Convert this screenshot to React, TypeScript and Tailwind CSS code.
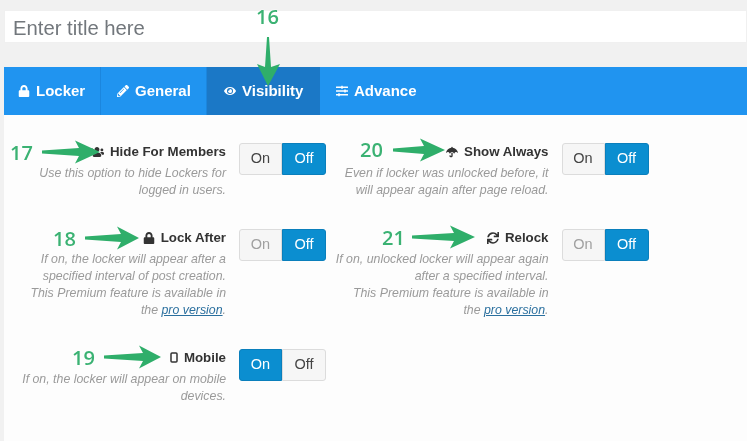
import type { ReactNode } from "react";
import { FaLock, FaPencilAlt, FaEye, FaSlidersH, FaUsers, FaUmbrella, FaSync } from "react-icons/fa";

type SettingProps = {
  icon: ReactNode;
  title: string;
  lines: string[];
  pro?: boolean;
  value: "on" | "off";
  disabled?: boolean;
};

// a single arrow of the annotation layer, pointing along +x from (x1,y) to (x2,y)
function hArrowPath(x1: number, x2: number, y: number, head: number) {
  const n = x2 - head;
  return `M${x1} ${y - 1.5} L${n + 4} ${y - 4} L${n} ${y - 11.5} L${x2} ${y} L${n} ${y + 11.5} L${n + 4} ${y + 4} L${x1} ${y + 1.5} Z`;
}

function MobileIcon() {
  return (
    <svg width="8" height="11" viewBox="0 0 8 11" fill="none" stroke="currentColor" strokeWidth="1.5">
      <rect x="1" y="1" width="6" height="9" rx="1" />
    </svg>
  );
}

function Toggle({ value, disabled }: { value: "on" | "off"; disabled?: boolean }) {
  const active = "bg-[#0b8ed0] text-white border-[#0a7fbc]";
  const idle = "bg-[#f6f6f6] border-[#dcdcdc]";
  return (
    <div className="flex w-[87px] h-[32px] shrink-0 text-[14.5px]">
      <div
        className={`flex w-[43px] items-center justify-center rounded-l-[3px] border ${
          value === "on" ? active : `${idle} ${disabled ? "text-[#a0a0a0]" : "text-[#444]"}`
        }`}
      >
        On
      </div>
      <div
        className={`flex w-[44px] items-center justify-center rounded-r-[3px] border ${
          value === "off" ? active : `${idle} text-[#444]`
        }`}
      >
        Off
      </div>
    </div>
  );
}

function Setting({ icon, title, lines, pro, value, disabled }: SettingProps) {
  return (
    <div className="flex w-[322px] items-start gap-[13px]">
      <div className="w-[222px] shrink-0 text-right">
        <div className="flex h-[18px] items-center justify-end gap-[6px] text-[13.3px] font-bold text-[#333]">
          <span className="text-[12px]">{icon}</span>
          {title}
        </div>
        <div className="mt-[4px] text-[12.35px] leading-[17.3px] italic text-[#9a9a9a]">
          {lines.map((l) => (
            <div key={l} className="whitespace-nowrap">
              {l}
            </div>
          ))}
          {pro && (
            <div>
              the <span className="text-[#2a6f9e] underline">pro version</span>.
            </div>
          )}
        </div>
      </div>
      <Toggle value={value} disabled={disabled} />
    </div>
  );
}

const tabs = [
  { label: "Locker", icon: <FaLock />, width: "w-[97px]", pad: "pl-[14px]", border: true },
  { label: "General", icon: <FaPencilAlt />, width: "w-[106px]", pad: "pl-[16px]", border: true },
  { label: "Visibility", icon: <FaEye />, width: "w-[113px]", pad: "pl-[17px]", active: true },
  { label: "Advance", icon: <FaSlidersH />, width: "w-[110px]", pad: "pl-[16px]" },
];

const badges = [
  { n: "16", cls: "left-[256px] top-[3px]" },
  { n: "17", cls: "left-[10px] top-[139px]" },
  { n: "18", cls: "left-[53px] top-[225px]" },
  { n: "19", cls: "left-[72px] top-[344px]" },
  { n: "20", cls: "left-[360px] top-[136px]" },
  { n: "21", cls: "left-[382px] top-[224px]" },
];

export default function App() {
  return (
    <div className="relative h-[441px] w-[747px] overflow-hidden bg-[#f1f1f1] font-['Liberation_Sans',Arial,sans-serif] blur-[0.35px]">
      <div className="pt-[10px] pl-[4px]">
        <input
          readOnly
          placeholder="Enter title here"
          className="block h-[33px] w-full border border-[#f0f0f0] bg-white px-[8px] pt-[4px] text-[20.3px] text-[#72777c] outline-none placeholder:text-[#72777c]"
        />

        <div className="mt-[24px] flex h-[48px] bg-[#2094f0] text-[15px] font-bold text-white">
          {tabs.map((t) => (
            <div
              key={t.label}
              className={`flex items-center gap-[6px] ${t.pad} ${t.width} ${t.active ? "bg-[#1b78c6]" : ""} ${
                t.border ? "border-r border-[#1b86de]" : ""
              }`}
            >
              <span className="text-[12px]">{t.icon}</span>
              {t.label}
            </div>
          ))}
        </div>

        <div className="h-[326px] bg-[#fdfdfd] pt-[28px]">
          <div className="grid grid-cols-[322.5px_322px] gap-y-[29px]">
            <Setting
              icon={<FaUsers className="text-[14px]" />}
              title="Hide For Members"
              lines={["Use this option to hide Lockers for", "logged in users."]}
              value="off"
            />
            <Setting
              icon={<FaUmbrella />}
              title="Show Always"
              lines={["Even if locker was unlocked before, it", "will appear again after page reload."]}
              value="off"
            />
            <Setting
              icon={<FaLock />}
              title="Lock After"
              lines={[
                "If on, the locker will appear after a",
                "specified interval of post creation.",
                "This Premium feature is available in",
              ]}
              pro
              value="off"
              disabled
            />
            <Setting
              icon={<FaSync />}
              title="Relock"
              lines={[
                "If on, unlocked locker will appear again",
                "after a specified interval.",
                "This Premium feature is available in",
              ]}
              pro
              value="off"
              disabled
            />
            <Setting
              icon={<MobileIcon />}
              title="Mobile"
              lines={["If on, the locker will appear on mobile", "devices."]}
              value="on"
            />
          </div>
        </div>
      </div>

      {/* annotation arrows */}
      <svg className="absolute left-0 top-0 h-[441px] w-[747px]" viewBox="0 0 747 441" fill="#2fae6a">
        <path d={hArrowPath(42, 100, 152, 25)} />
        <path d={hArrowPath(85, 139, 238, 22)} />
        <path d={hArrowPath(104, 161, 357, 22)} />
        <path d={hArrowPath(393, 445, 150, 25)} />
        <path d={hArrowPath(412, 475, 237, 25)} />
        <path d="M267 37 L265 67 L257 64 L268 86 L280 64 L271 67 L269 37 Z" />
      </svg>

      {badges.map((b) => (
        <div
          key={b.n}
          className={`absolute ${b.cls} font-['Open_Sans',sans-serif] text-[20px] font-semibold leading-[28px] text-[#3bb273] [text-shadow:0_0_2px_#fff,0_0_2px_#fff]`}
        >
          {b.n}
        </div>
      ))}
    </div>
  );
}
